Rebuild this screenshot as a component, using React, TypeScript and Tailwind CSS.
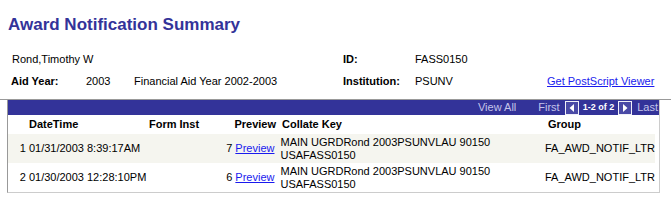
const ArrowBox = ({dir}: {dir: "left" | "right"}) => (
  <svg width="14" height="14" viewBox="0 0 14 14" className="block">
    <rect x="0.5" y="0.5" width="13" height="13" fill="#4a4aa6" stroke="#f0f0f8" />
    {dir === "left" ? (
      <polygon points="9,3 9,11 4.5,7" fill="#ffffff" />
    ) : (
      <polygon points="5,3 5,11 9.5,7" fill="#ffffff" />
    )}
  </svg>
);

const rows = [
  {n: 1, date: "01/31/2003 8:39:17AM", count: 7, bg: "bg-[#f5f5ef]"},
  {n: 2, date: "01/30/2003 12:28:10PM", count: 6, bg: "bg-white"},
];

export default function App() {
  return (
    <div className="w-[671px] h-[204px] bg-white text-black text-[11px] leading-[13px] font-['Liberation_Sans',Arial,sans-serif] overflow-hidden whitespace-nowrap">
      <h1 className="pt-[15px] pl-[8px] text-[17px] leading-[20px] font-bold text-[#333399]">
        Award Notification Summary
      </h1>

      <div className="mt-[18px] flex">
        <div className="w-[343px] pl-[12px]">Rond,Timothy W</div>
        <div className="w-[72px] font-bold">ID:</div>
        <div>FASS0150</div>
      </div>

      <div className="mt-[9px] flex">
        <div className="w-[86px] pl-[11px] font-bold">Aid Year:</div>
        <div className="w-[48px]">2003</div>
        <div className="w-[209px]">Financial Aid Year 2002-2003</div>
        <div className="w-[72px] font-bold">Institution:</div>
        <div className="w-[132px]">PSUNV</div>
        <a href="#" className="text-[#1a1aee] underline">Get PostScript Viewer</a>
      </div>

      <div className="mt-[11px] h-px bg-[#999999]" />

      <div className="ml-[7px] w-[653px] border-l border-r border-b border-l-[#999999] border-r-[#cccccc] border-b-[#cccccc]">
        {/* nav band */}
        <div className="h-[15px] bg-[#333399] flex items-center justify-end pr-[1px] text-[#c4c4ea]">
          <span className="mr-[22px]">View All</span>
          <span className="mr-[5px]">First</span>
          <ArrowBox dir="left" />
          <span className="mx-[4px] text-[9px] font-bold text-white">1-2 of 2</span>
          <ArrowBox dir="right" />
          <span className="ml-[5px]">Last</span>
        </div>

        {/* header */}
        <div className="h-[19px] flex items-center font-bold">
          <div className="w-[21px]" />
          <div className="w-[120px]">DateTime</div>
          <div className="w-[50px]">Form Inst</div>
          <div className="w-[77px] text-right">Preview</div>
          <div className="w-[272px] pl-[6px]">Collate Key</div>
          <div>Group</div>
        </div>

        {/* rows */}
        <div className="pr-[4px]">
          {rows.map((r) => (
            <div key={r.n} className={`h-[29px] flex items-center ${r.bg}`}>
              <div className="w-[21px] text-right pr-[3px]">{r.n}</div>
              <div className="w-[120px]">{r.date}</div>
              <div className="w-[50px]" />
              <div className="w-[77px] text-right">
                {r.count}{" "}
                <a href="#" className="text-[#1a1aee] underline">Preview</a>
              </div>
              <div className="w-[272px] pl-[6px]">
                <div>MAIN UGRDRond 2003PSUNVLAU 90150</div>
                <div>USAFASS0150</div>
              </div>
              <div>FA_AWD_NOTIF_LTR</div>
            </div>
          ))}
        </div>
      </div>
    </div>
  );
}
